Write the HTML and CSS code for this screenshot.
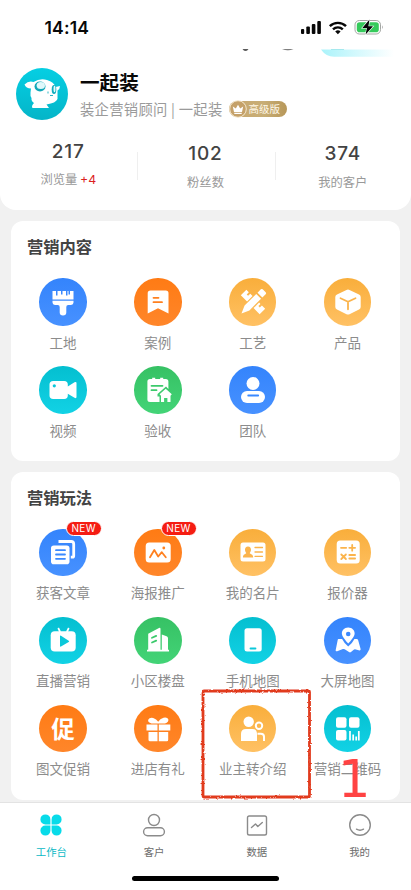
FILE: index.html
```html
<!DOCTYPE html>
<html lang="zh-CN">
<head>
<meta charset="utf-8">
<meta name="viewport" content="width=device-width, initial-scale=1">
<title>工作台</title>
<link rel="stylesheet" href="styles.css">
</head>
<body>
<div class="screen">
  <header class="header">
    <div class="status">
      <span class="time">14:14</span>
      <svg class="indicators" viewBox="300 18 84 18" width="84" height="18">
        <g fill="#080808">
          <rect x="301" y="29" width="3.2" height="5" rx="1"/><rect x="306.3" y="26.5" width="3.6" height="7.5" rx="1"/><rect x="311.8" y="24" width="3.6" height="10" rx="1"/><rect x="317.3" y="21" width="3.6" height="13" rx="1"/>
        </g>
        <g fill="none" stroke="#080808" stroke-width="2.4"><path d="M329.8 26.2a11.5 11.5 0 0 1 16.2 0"/><path d="M333 29.4a7 7 0 0 1 9.800 0"/></g>
        <path d="M335.200 31.500a4 4 0 0 1 5.400 0L337.900 34.300z" fill="#080808"/>
        <rect x="355" y="20.500" width="25.500" height="13.500" rx="4.300" fill="#fff" stroke="#a2a5a2"/>
        <rect x="356.800" y="22.200" width="22" height="10" rx="2.800" fill="#35ca5b"/>
        <path d="M382 25.200q1.800 2 0 4z" fill="#999"/>
        <path d="M369.500 19.500L362.300 28h4.600l-1.300 6.500L373 26.300h-4.600z" fill="#050505" stroke="#fff" stroke-width="1.200" paint-order="stroke"/>
      </svg>
    </div>
    <div class="peek">
      <svg viewBox="0 0 411 9" width="411" height="9">
        <defs><linearGradient id="pill"><stop offset="0" stop-color="#aaf3fa"/><stop offset=".5" stop-color="#d5f9fd"/><stop offset="1" stop-color="#fff"/></linearGradient></defs>
        <path d="M242.500 .3h6q-3 3-6 0z" fill="#222"/><path d="M282 .3h11.500q-5.500 2-11.500 0z" fill="#555"/>
        <path d="M321 .5h73v7.300h-60q-8 0-13-7.300z" fill="url(#pill)"/><path d="M331 .5h13" stroke="#a5e9ee"/>
      </svg>
    </div>
    <div class="profile">
      <svg class="avatar" viewBox="-26 -26 52 52" width="52" height="52">
        <defs><linearGradient id="av" x2="0" y2="1"><stop stop-color="#05cfe3"/><stop offset="1" stop-color="#05b5c8"/></linearGradient></defs>
        <circle r="26" fill="url(#av)"/>
        <path d="M-17.500-9.500q4-4 9-2.500Q-2-16 5-14q7 2 8.500 7l4.500-1q0 3-2.500 4.500L15.500 5Q14 9 4.500 10.500L7 14H-9.500Q-11 12-8 9-11 7-10.500 4-12 2-11.500-1.500l.5-4q-5 0-6.500-4z" fill="#fff"/>
        <ellipse cx="-2" cy="-7.500" rx="5.500" ry="5" fill="#10a8b8"/><ellipse cx="-1.200" cy="-8.500" rx="4.200" ry="3.500" fill="#dff8fa"/>
        <ellipse cx="12" cy="-4.500" rx="2.300" ry="4.500" fill="#10adbd"/><ellipse cx="12.500" cy="-5" rx="1" ry="3.300" fill="#e4fbfc"/>
        <path d="M6-2.500v2M8 1.500h3" stroke="#2ab8c7"/>
      </svg>
      <div class="who">
        <h1>一起装</h1>
        <div class="role"><span>装企营销顾问 | 一起装</span>
          <span class="level"><svg viewBox="0 0 18 18" width="18" height="18"><circle cx="9" cy="9" r="8.300" fill="#c5a169" stroke="#f4e8d0" stroke-width="1"/><path d="M3.800 6.500l3 2L9 4.800l2.200 3.700 3-2-1.200 5.500H5zM5.300 12.700h7.400v1.200H5.300z" fill="#fff"/></svg><b>高级版</b></span>
        </div>
      </div>
    </div>
    <div class="stats">
      <div class="stat first"><strong>217</strong><span>浏览量 <em>+4</em></span></div>
      <div class="stat"><strong>102</strong><span>粉丝数</span></div>
      <div class="stat"><strong>374</strong><span>我的客户</span></div>
    </div>
  </header>

  <section class="card content">
    <h2>营销内容</h2>
    <div class="grid">
      <div class="item"><div class="icon blue"><svg viewBox="-24 -24 48 48"><path d="M-10.500-11h3.500v4.500h1.500V-11h3.500v3.500h1.500V-11H3v4.500h1.500V-11h1v3.500H7V-11h3.500v8.500h-21zM-10.500-1.200h21v1.800q0 2.400-2.500 2.400H5.200Q3.300 3 3.300 5v5.500q0 3-3.300 3t-3.300-3V5q0-2-1.900-2H-8q-2.500 0-2.500-2.400z"/></svg></div><span>工地</span></div>
      <div class="item"><div class="icon orange"><svg viewBox="-24 -24 48 48"><path d="M-7.500-11.500H7.800q2.700 0 2.700 2.700V11.500L0 6.300l-10.300 5.200V-8.800q0-2.700 2.800-2.700z"/><path class="cut" d="M-4.500-4.200h5M-4.500.2h8.500"/></svg></div><span>案例</span></div>
      <div class="item"><div class="icon gold"><svg viewBox="-24 -24 48 48"><g transform="rotate(45)"><path d="M-13.300-3.900h3.500v3h2v-3h3.300v7.800h-8.800zM4.700-3.900h2v3h2v-3h4.600v7.800H4.700z"/><path d="M-3.400-8H3.400V8.500L0 16.300l-3.400-7.800zM-3.400-14.500q0-1.300 1.300-1.300h4.200q1.300 0 1.300 1.300v4.700h-6.800z"/></g></svg></div><span>工艺</span></div>
      <div class="item"><div class="icon gold"><svg viewBox="-24 -24 48 48"><path d="M-1.500-12.100q1.500-.8 3 0l9.500 4.600q1.700.8 1.700 2.500v10q0 1.700-1.700 2.500l-9.500 4.700q-1.500.8-3 0L-11 7.500q-1.700-.8-1.700-2.500V-5q0-1.700 1.700-2.500z"/><path class="cut" d="M-7.500-3.800L0-.2l7.500-3.600M0 0v7.300"/></svg></div><span>产品</span></div>
      <div class="item"><div class="icon cyan"><svg viewBox="-24 -24 48 48"><path d="M-9.800-9H1.200q3.600 0 3.600 3.600v1.900l6.700-4.200q2-1 2 .8V7q0 1.800-2 .8L4.800 3.700v1.900q0 3.400-3.600 3.400h-11q-3.700 0-3.700-3.400V-5.400q0-3.600 3.700-3.600z"/><circle class="hole" cx="-8.700" cy="-4.200" r="1.600"/></svg></div><span>视频</span></div>
      <div class="item"><div class="icon green"><svg viewBox="-24 -24 48 48"><path d="M-8-11h2.200v-1.300h3V-11h5v-1.300h3V-11h2.600q2.600 0 2.600 2.500V-1L8-3.500-.5 4v2.500h2V12H-8q-2.600 0-2.600-2.500v-18Q-10.600-11-8-11z"/><path class="cut" d="M-6.500-4.200h11M-6.500.2h5"/><path d="M7.700-1.300l6.100 5.500-1.300 1.600V12H9.400V8H6.100v4H3V5.800L1.600 4.200z"/></svg></div><span>验收</span></div>
      <div class="item"><div class="icon blue"><svg viewBox="-24 -24 48 48"><circle cy="-6.500" r="6.500"/><rect x="-12" y="1" width="24" height="12" rx="6"/><path class="cut" d="M-4.800 5.500h10"/></svg></div><span>团队</span></div>
    </div>
  </section>

  <section class="card play">
    <h2>营销玩法</h2>
    <div class="grid">
      <div class="item"><div class="icon blue"><svg viewBox="-24 -24 48 48"><path d="M-4.500-10.500H8.200q2.500 0 2.500 2.500V4q0 1.200-1.200 1.200H7.800" fill="none" stroke="#fff" stroke-width="2.800"/><rect x="-12" y="-6.500" width="18.500" height="18.700" rx="2.800"/><path class="cut" d="M-7-1.800h9M-7 2.500h9M-7 6.800h9"/></svg><i class="new">NEW</i></div><span>获客文章</span></div>
      <div class="item"><div class="icon orange"><svg viewBox="-24 -24 48 48"><rect x="-12.300" y="-9.500" width="25" height="20" rx="3.500"/><path class="cut" d="M-8 5.200l4.300-7.200L.2 4.500 3.800.2l4 5"/><circle class="hole" cx="5.800" cy="-4" r="1.400"/></svg><i class="new">NEW</i></div><span>海报推广</span></div>
      <div class="item"><div class="icon gold"><svg viewBox="-24 -24 48 48"><rect x="-12.500" y="-9.500" width="25" height="19" rx="2.500"/><path class="hole" d="M-5-5.500c2 0 3.200 1.500 3 3.600-.2 1.500-.8 2.300-1.300 3 .5 1.400 3.500 1 3.500 4.300H-10c0-3.300 2.700-2.900 3.300-4.300-.6-.7-1.100-1.500-1.300-3-.2-2.100 1-3.600 3-3.600z"/><path class="cut thin" d="M2-4.500h7.500M2 0h7.500M2 4.300h7.500"/></svg></div><span>我的名片</span></div>
      <div class="item"><div class="icon gold"><svg viewBox="-24 -24 48 48"><rect x="-11.300" y="-11.500" width="23" height="23" rx="3.500"/><path class="cut" d="M-7-4.200h5.200M1.300-4.200h5.800M4.200-7.100v5.800M-6.700 2.500l4.600 4.500M-2.100 2.500L-6.700 7M1.300 3h5.800M1.300 6.500h5.800"/></svg></div><span>报价器</span></div>
      <div class="item"><div class="icon cyan"><svg viewBox="-24 -24 48 48"><path d="M-4.800-12l2 4M5.800-12l-2 4" stroke="#fff" stroke-width="1.700"/><rect x="-12.300" y="-8.800" width="25" height="20.200" rx="4"/><path class="hole" d="M-3-3.800q0-1 1-.5L5.700.8q1 .6 0 1.200L-2 6.500q-1 .5-1-.5z"/></svg></div><span>直播营销</span></div>
      <div class="item"><div class="icon green"><svg viewBox="-24 -24 48 48"><path d="M-9.800-6.200L1-12q1.500-.6 1.500 1V9.700h1.300V-5.600l4.800 1.900q1.400.6 1.400 2V9.700h1v1.800h-22V9.700h1.200z"/><path class="cut" d="M-6-2.200l4.200-1.900M-6 2.500L-1.800.6"/></svg></div><span>小区楼盘</span></div>
      <div class="item"><div class="icon cyan"><svg viewBox="-24 -24 48 48"><rect x="-8.500" y="-11.700" width="17.200" height="23.200" rx="2.500"/><path class="cut" d="M-2.500 8.500h5"/></svg></div><span>手机地图</span></div>
      <div class="item"><div class="icon blue"><svg viewBox="-24 -24 48 48"><path d="M-9.500-1h3.600Q-4 3 .2 6.500 4.600 3 6.400-1h2.300q1 0 1.400 1l2.500 9q.3 1.300-1 1.500L7 9.300q-1 0-1.600.6L3 12q-1 .8-2 0l-4.300-2.800q-1-.5-1.800-.2l-5.700 2.200q-1.900.6-1.500-1.200l2-10q.1-1 .8-1z"/><path class="pin" d="M.2-12.500c-4 0-6.700 3-6.300 6.500C-5.600-2.400.2 3.500.2 3.500S6.200-2.400 6.600-6C6.900-9.600 4-12.500.2-12.500z"/><circle class="hole" cx=".2" cy="-6" r="2.300"/></svg></div><span>大屏地图</span></div>
      <div class="item"><div class="icon orange"><b class="glyph">促</b></div><span>图文促销</span></div>
      <div class="item"><div class="icon orange"><svg viewBox="-24 -24 48 48"><path d="M-11.500-4.500h11v6h-11zM.8-4.500h11.500v6H.8zM-9.500 3h9v9.300h-7.500q-1.500 0-1.500-1.500zM.8 3h9.400v7.800q0 1.500-1.500 1.500H.8z"/><path d="M-.3-5.500h-6.200q-4-1.300-3.300-3.800 1.300-2.600 5-1.800Q-1.500-10.200.2-7.200 2-10.200 5.500-11.300q4-.7 4.800 1.600.7 2.800-3.300 4.200z"/></svg></div><span>进店有礼</span></div>
      <div class="item"><div class="icon gold"><svg viewBox="-24 -24 48 48"><circle cx="-4.300" cy="-7.200" r="5.200"/><path d="M-12 12V5q0-5 5-5H-.7Q4 0 4 5v7z"/><circle cx="6" cy="-3.300" r="3.200" fill="none" stroke="#fff" stroke-width="2"/><path d="M4.500 4.700h3.300q3.200 0 3.200 3V12" fill="none" stroke="#fff" stroke-width="2"/></svg></div><span>业主转介绍</span></div>
      <div class="item"><div class="icon cyan"><svg viewBox="-24 -24 48 48"><rect x="-12" y="-11.800" width="10.500" height="10.500" rx="2"/><rect x="1" y="-11.800" width="10.500" height="10.500" rx="2"/><rect x="-12" y="1" width="10.500" height="10.500" rx="2"/><path d="M2 2v9.500M5.200 5.500v6M8.200 7.500v4M10.800 2v9.500" stroke="#fff" stroke-width="1.700"/></svg></div><span>营销二维码</span></div>
    </div>
  </section>

  <nav class="tabs">
    <div class="tab active"><svg viewBox="-12 -12 24 24" width="24" height="24"><path d="M-.6-.6h-5a5 5 0 1 1 5-5zM.6-.6h5a5 5 0 1 0-5-5zM-.6.6h-5a5 5 0 1 0 5 5zM.6.6h5a5 5 0 1 1-5 5z" fill="#08dbe9"/></svg><span>工作台</span></div>
    <div class="tab"><svg viewBox="-12 -12 24 24" width="24" height="24"><g class="line"><circle cy="-5" r="5.500"/><rect x="-10.400" y="2.700" width="20.800" height="8" rx="4"/></g></svg><span>客户</span></div>
    <div class="tab"><svg viewBox="-12 -12 24 24" width="24" height="24"><g class="line"><rect x="-9.500" y="-9" width="19" height="19" rx="1.800"/><path d="M-5.500 2.500L-1.500-1l2.300 2.500L5.300-2.500"/></g></svg><span>数据</span></div>
    <div class="tab"><svg viewBox="-12 -12 24 24" width="24" height="24"><g class="line"><circle r="10.300"/><path d="M-3.500 4.200q3.500 2 7 0"/></g></svg><span>我的</span></div>
  </nav>
  <div class="home"></div>

  <svg class="frame" viewBox="0 0 116 116" width="116" height="116">
    <defs><filter id="rough" x="-5%" y="-5%" width="110%" height="110%"><feTurbulence type="fractalNoise" baseFrequency=".4" numOctaves="2" seed="4"/><feDisplacementMap in="SourceGraphic" scale="2.800" xChannelSelector="R" yChannelSelector="G"/></filter></defs>
    <rect x="5" y="5" width="106.500" height="106" rx="1" fill="none" stroke="#e13a1e" stroke-width="2.800" filter="url(#rough)"/>
  </svg>
  <div class="mark">1</div>
</div>
</body>
</html>
```
FILE: styles.css
```css
* { box-sizing: border-box; }
body { margin: 0; background: #f1f1f1; font-family: Inter, "Noto Sans CJK SC", sans-serif; color: #434343; }
h1, h2 { margin: 0; }
svg { display: block; flex: none; }
.screen { position: relative; width: 411px; height: 890px; overflow: hidden; display: flex; flex-direction: column; }
.header { height: 210px; background: #fff; border-radius: 0 0 16px 16px; flex: none; }
.status { height: 49px; padding: 5px 27px 0 44.5px; display: flex; justify-content: space-between; align-items: center; }
.time { font-size: 17.5px; font-weight: 600; color: #080808; letter-spacing: .2px; }
.indicators { margin-top: -1px; }
.peek { height: 9px; }
.profile { height: 72px; padding: 10px 0 0 16px; display: flex; gap: 12px; }
.who { flex: 1; }
.who h1 { font: 700 19.6px/27px "Noto Sans CJK SC", sans-serif; color: #080808; }
.role { display: flex; align-items: center; height: 27px; font: 14.3px/20px "Noto Sans CJK SC", sans-serif; letter-spacing: .3px; color: #9a9a9a; white-space: nowrap; }
.level { display: flex; align-items: center; gap: 2px; margin-left: 6px; width: 58.5px; height: 16px; border-radius: 8px; background: linear-gradient(90deg, #c8a76e, #c8ae76 60%, #b79759); color: #fff; letter-spacing: 0; }
.level b { font-size: 10.5px; line-height: 16px; font-weight: 400; color: #fff8e8; }
.stats { display: grid; grid-template-columns: 136.5px 138px 136.5px; padding-top: 10px; }
.stat { display: flex; flex-direction: column; align-items: center; position: relative; padding-top: 2px; }
.stat.first { padding-top: 0; }
.stat + .stat::before { content: ""; position: absolute; left: 0; top: 12px; width: 1px; height: 28px; background: #efefef; }
.stat strong { font-size: 19px; line-height: 24px; font-weight: 500; letter-spacing: .8px; }
.stat span { font: 12.3px/18px "Noto Sans CJK SC", sans-serif; color: #999; margin-top: 6.5px; }
.stat.first span { margin-top: 6px; }
.stat em { font: 400 12.3px/18px Inter, sans-serif; color: #dc1f1f; }
.card { flex: none; margin: 11px 11px 0 10.5px; padding: 14px 5px 0; background: #fff; border-radius: 12px; }
.content { height: 239.5px; }
.play { height: 328.5px; }
.card h2 { padding-left: 11.5px; font: 700 16.3px/22px "Noto Sans CJK SC", sans-serif; color: #434343; }
.grid { display: grid; grid-template-columns: repeat(4, 1fr); grid-auto-rows: 88.2px; margin-top: 21px; }
.item { display: flex; flex-direction: column; align-items: center; }
.item > span { font: 13.5px/20px "Noto Sans CJK SC", sans-serif; color: #8c8c8c; margin-top: 6px; white-space: nowrap; }
.icon { position: relative; width: 47.5px; height: 47.5px; border-radius: 50%; display: flex; align-items: center; justify-content: center; background: linear-gradient(var(--top), var(--bottom)); }
.icon svg { width: 48px; height: 48px; fill: #fff; }
.cut { fill: none; stroke: var(--mid); stroke-width: 1.8; stroke-linecap: round; stroke-linejoin: round; }
.thin { stroke-width: 1.3; }
.hole { fill: var(--mid); }
.pin { stroke: var(--mid); stroke-width: 2; paint-order: stroke; }
.blue { --top: #3484fc; --mid: #3b89ff; --bottom: #4791ff; }
.orange { --top: #ff7b14; --mid: #ff801f; --bottom: #ff862a; }
.gold { --top: #f9ae3b; --mid: #fbb44c; --bottom: #ffc164; }
.cyan { --top: #04bfd0; --mid: #0bc8da; --bottom: #12d2e5; }
.green { --top: #36c164; --mid: #3cca6c; --bottom: #43d477; }
.glyph { font: 700 23.5px/32px "Noto Sans CJK SC", sans-serif; color: #fff; margin-top: -2px; }
.new { position: absolute; left: 26.5px; top: -8px; width: 36px; height: 15px; border: 1px solid #fff; border-radius: 8px; background: #f51d12; color: #fff; font: 400 10px/13px Inter, sans-serif; letter-spacing: .4px; text-align: center; }
.tabs { flex: none; height: 72px; margin-top: 2px; padding-top: 10px; border-top: 1px solid #e3e3e3; background: #fff; display: grid; grid-template-columns: repeat(4, 1fr); }
.tab { display: flex; flex-direction: column; align-items: center; gap: 7px; font: 10.4px/16px "Noto Sans CJK SC", sans-serif; color: #6c6c6c; }
.tab.active { color: #08b9c5; }
.line { fill: none; stroke: #8b8b8b; stroke-width: 1.4; stroke-linejoin: round; stroke-linecap: round; }
.home { flex: 1; background: #fff; }
.home::before { content: ""; display: block; width: 147px; height: 5px; margin: 2px auto 0; border-radius: 3px; background: #000; }
.frame { position: absolute; left: 198px; top: 686px; }
.mark { position: absolute; left: 338px; top: 750px; font: 51px/60px "DejaVu Sans", sans-serif; color: #ff4343; }
```
